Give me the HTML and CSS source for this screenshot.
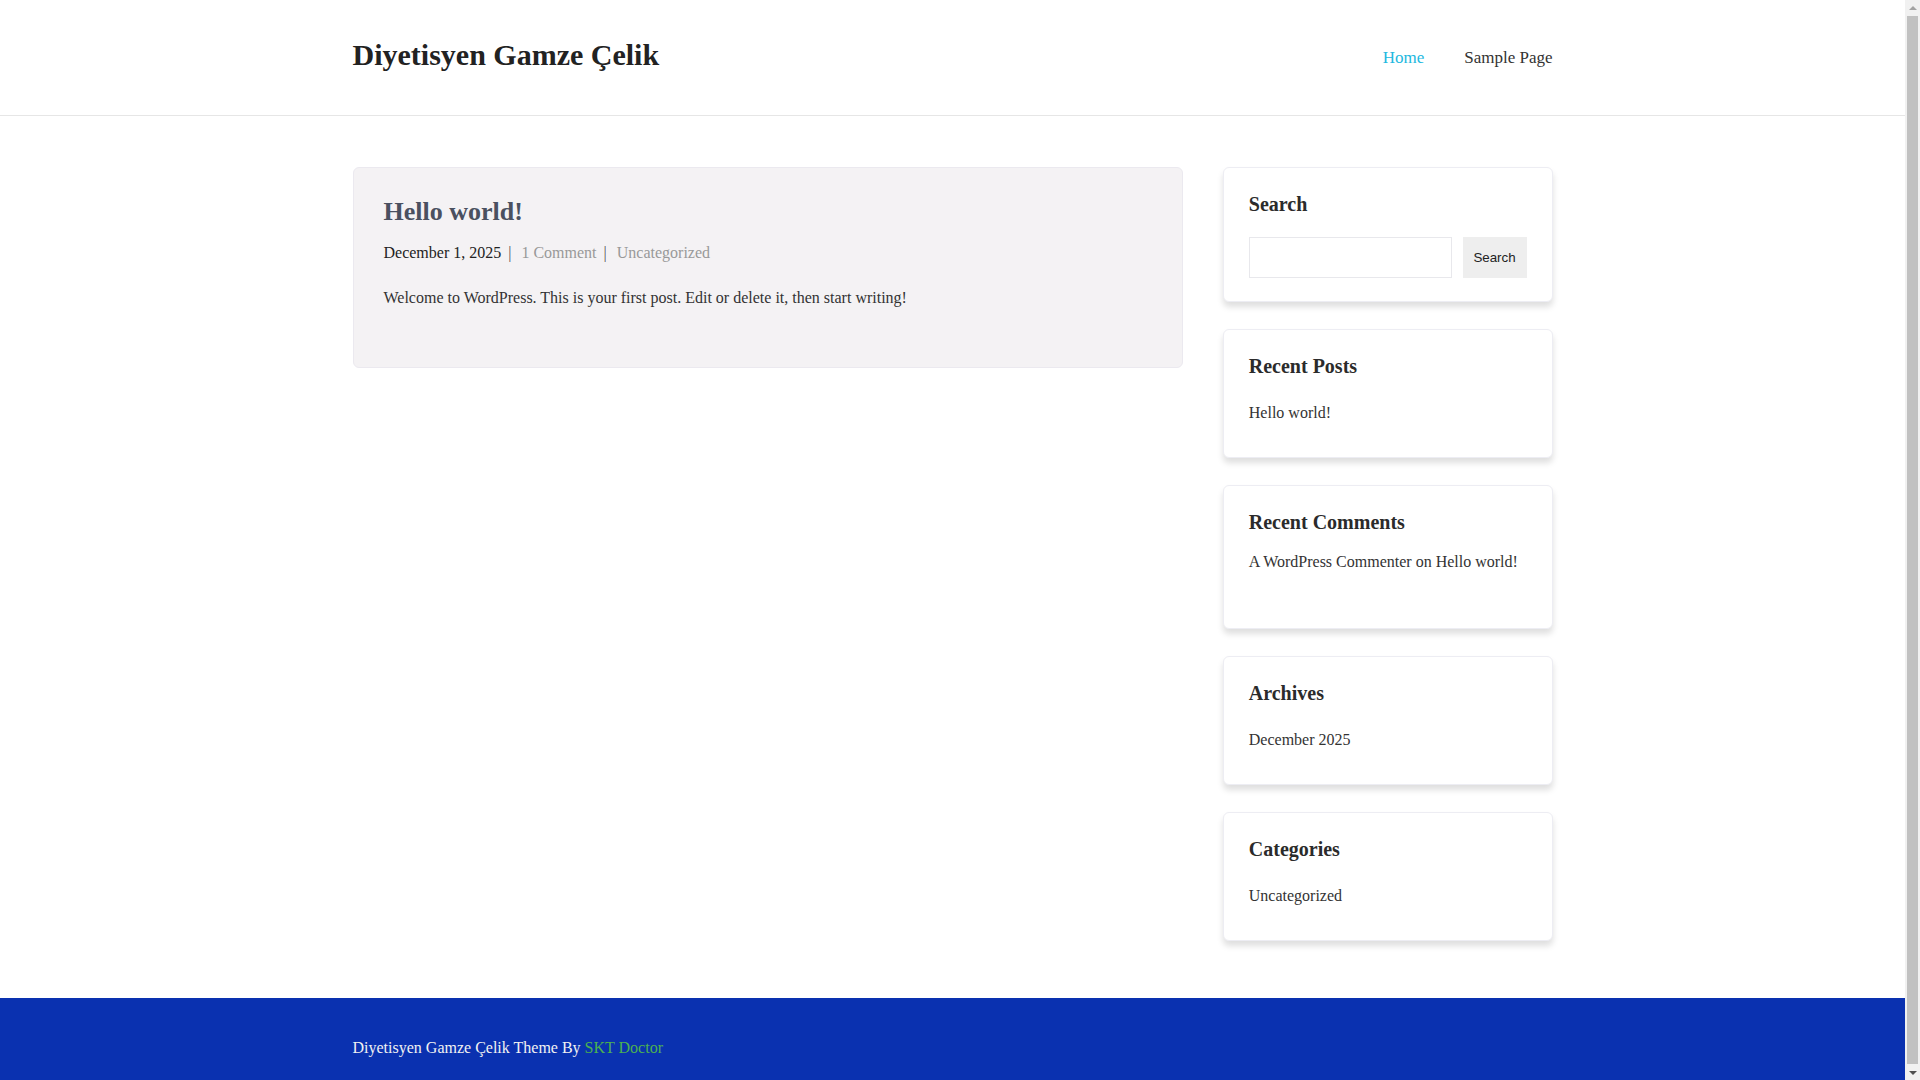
FILE: index.html
```html
<!DOCTYPE html>
<html lang="tr">
<head>
    <meta charset="UTF-8">
    <meta name="viewport" content="width=device-width, initial-scale=1.0">
    <title>Diyetisyen Gamze Çelik</title>
    <link rel="stylesheet" href="styles.css">
</head>
<body>
    <header class="site-header">
        <div class="header-inner">
            <a class="site-title" href="#">Diyetisyen Gamze Çelik</a>
            <nav class="main-nav">
                <a class="current" href="#">Home</a>
                <a href="#">Sample Page</a>
            </nav>
        </div>
    </header>

    <div class="site-main">
        <main class="content">
            <article class="post-card">
                <h2 class="post-title">Hello world!</h2>
                <div class="post-meta">
                    <span class="post-date">December 1, 2025</span>
                    <span class="sep">|</span>
                    <a href="#">1 Comment</a>
                    <span class="sep">|</span>
                    <a href="#">Uncategorized</a>
                </div>
                <p class="post-excerpt">Welcome to WordPress. This is your first post. Edit or delete it, then start writing!</p>
            </article>
        </main>

        <aside class="sidebar">
            <section class="widget widget-search">
                <h2>Search</h2>
                <form class="search-form">
                    <input type="search" aria-label="Search">
                    <button type="button">Search</button>
                </form>
            </section>

            <section class="widget">
                <h2>Recent Posts</h2>
                <ul>
                    <li><a href="#">Hello world!</a></li>
                </ul>
            </section>

            <section class="widget widget-comments">
                <h2>Recent Comments</h2>
                <ul>
                    <li><a href="#">A WordPress Commenter</a> on <a href="#">Hello world!</a></li>
                </ul>
            </section>

            <section class="widget">
                <h2>Archives</h2>
                <ul>
                    <li><a href="#">December 2025</a></li>
                </ul>
            </section>

            <section class="widget">
                <h2>Categories</h2>
                <ul>
                    <li><a href="#">Uncategorized</a></li>
                </ul>
            </section>
        </aside>
    </div>

    <footer class="site-footer">
        <div class="footer-inner">
            Diyetisyen Gamze Çelik Theme By <a href="#">SKT Doctor</a>
        </div>
    </footer>

    <!-- browser scrollbar, drawn since the screenshot hides it -->
    <div class="fake-scrollbar" aria-hidden="true">
        <span class="arrow up"></span>
        <span class="thumb"></span>
        <span class="arrow down"></span>
    </div>
</body>
</html>
```

FILE: styles.css
```css
body {
    margin: 0;
    padding-right: 15px;
    font-family: "Liberation Serif", "Times New Roman", serif;
    font-size: 16px;
    color: #333;
    background-color: #fff;
}

a {
    color: inherit;
    text-decoration: none;
}

/* header */
.site-header {
    border-bottom: 1px solid #e6e6e6;
}

.header-inner {
    width: 1200px;
    height: 115px;
    margin: 0 auto;
    display: flex;
    align-items: center;
    justify-content: space-between;
}

.site-title {
    font-size: 30px;
    font-weight: bold;
    color: #222;
    margin-top: -5px;
}

.main-nav {
    display: flex;
    gap: 40px;
    font-size: 17px;
}

.main-nav a {
    color: #333;
}

.main-nav a.current {
    color: #22b8e0;
}

/* layout */
.site-main {
    width: 1200px;
    margin: 51px auto 0;
    padding-bottom: 30px;
    display: flex;
    align-items: flex-start;
    gap: 40px;
}

.content {
    width: 831px;
}

.sidebar {
    width: 330px;
}

/* post */
.post-card {
    background-color: #f4f2f4;
    border: 1px solid #ebe9ef;
    border-radius: 6px;
    padding: 27px 30px 57px;
}

.post-title {
    margin: 0;
    font-size: 26px;
    line-height: 34px;
    color: #4a5060;
}

.post-meta {
    margin-top: 12px;
    line-height: 24px;
    color: #999;
}

.post-meta .post-date {
    color: #222;
}

.post-meta .sep {
    color: #555;
    margin: 0 6px 0 3px;
}

.post-excerpt {
    margin: 21px 0 0;
    line-height: 24px;
    color: #333;
}

/* widgets */
.widget {
    background-color: #fff;
    border: 1px solid #ededf3;
    border-radius: 6px;
    box-shadow: 0 5px 6px rgba(0, 0, 0, 0.13);
    padding: 23px 25px 32px;
    margin-bottom: 27px;
}

.widget h2 {
    margin: 0 0 22px;
    font-size: 20px;
    line-height: 26px;
    color: #2b2b2b;
}

.widget ul {
    list-style: none;
    margin: 0;
    padding: 0;
}

.widget li {
    line-height: 24px;
    color: #333;
}

.widget-search {
    padding-top: 23px;
    padding-bottom: 23px;
}

.widget-search h2 {
    margin-bottom: 20px;
}

.search-form {
    display: flex;
    gap: 11px;
}

.search-form input {
    flex: 1;
    height: 41px;
    box-sizing: border-box;
    border: 1px solid #e8e8ec;
    border-radius: 0;
    outline: none;
}

.search-form button {
    width: 64px;
    height: 41px;
    border: none;
    background-color: #eeeeee;
    color: #222;
    font-family: "Liberation Sans", Arial, sans-serif;
    font-size: 13.33px;
    padding: 0;
}

.widget-comments h2 {
    margin-bottom: 15px;
}

.widget-comments {
    padding-bottom: 54px;
}

/* footer */
.site-footer {
    background-color: #0a31b0;
    color: #f2f2f2;
}

.footer-inner {
    width: 1200px;
    margin: 0 auto;
    padding: 38px 0 40px;
    line-height: 24px;
}

.footer-inner a {
    color: #4cb050;
}

/* scrollbar */
.fake-scrollbar {
    position: fixed;
    top: 0;
    right: 0;
    bottom: 0;
    width: 15px;
    background-color: #f1f1f1;
    display: flex;
    flex-direction: column;
    align-items: center;
}

.fake-scrollbar .arrow {
    height: 15px;
    width: 15px;
    display: flex;
    align-items: center;
    justify-content: center;
}

.fake-scrollbar .arrow::before {
    content: "";
    border-left: 4px solid transparent;
    border-right: 4px solid transparent;
}

.fake-scrollbar .up::before {
    border-bottom: 4px solid #a3a3a3;
}

.fake-scrollbar .down::before {
    border-top: 4px solid #505050;
}

.fake-scrollbar .thumb {
    flex: 1;
    width: 11px;
    margin: 1px 0;
    background-color: #c1c1c1;
}
```
